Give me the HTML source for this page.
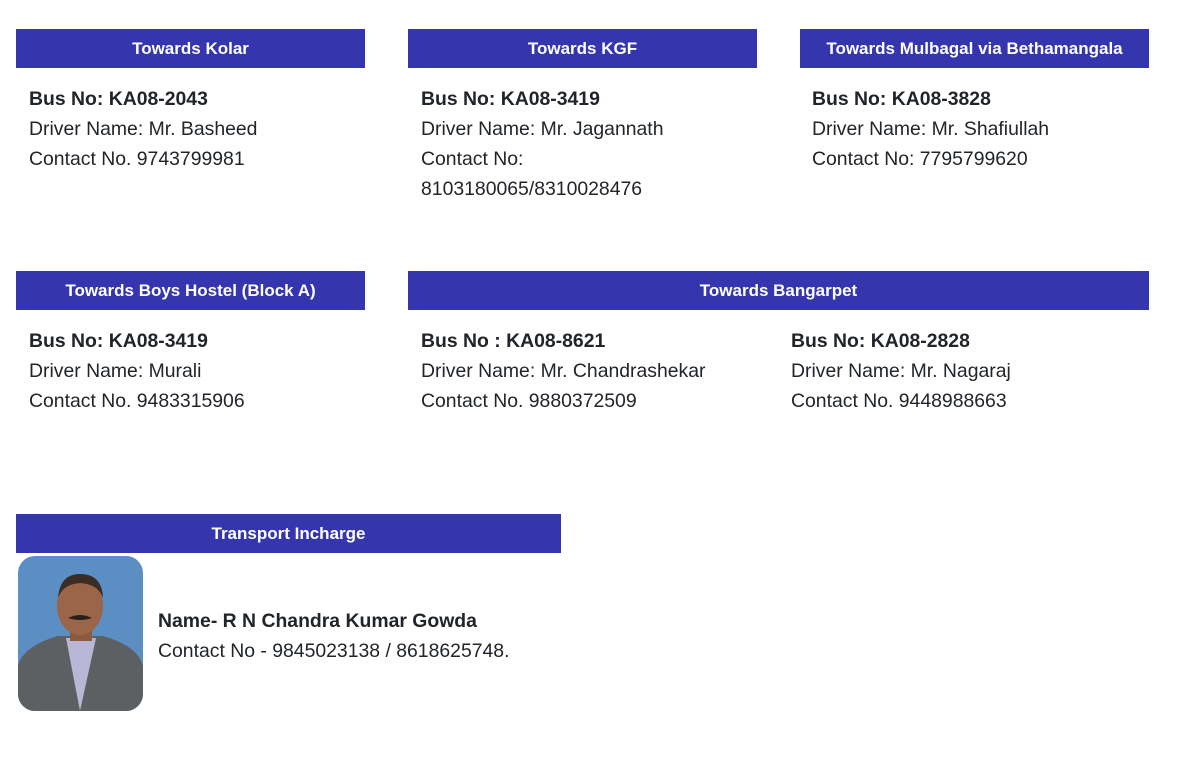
<!DOCTYPE html>
<html><head><style>
body{margin:0;background:#fff;font-family:"Liberation Sans",sans-serif;color:#212529;width:1196px;height:771px;overflow:hidden;position:relative}
.h{position:absolute;height:39px;background:#3535ae;color:#fff;font-weight:bold;font-size:17px;line-height:40px;text-align:center}
.t{position:absolute;font-size:19.4px;line-height:30px}
.t b{font-weight:bold}
</style></head><body>
<div class="h" style="left:16px;top:29px;width:349px">Towards Kolar</div>
<div class="h" style="left:408px;top:29px;width:349px">Towards KGF</div>
<div class="h" style="left:800px;top:29px;width:349px">Towards Mulbagal via Bethamangala</div>
<div class="t" style="left:29px;top:84px"><b>Bus No: KA08-2043</b><br>Driver Name: Mr. Basheed<br>Contact No. 9743799981</div>
<div class="t" style="left:421px;top:84px"><b>Bus No: KA08-3419</b><br>Driver Name: Mr. Jagannath<br>Contact No:<br>8103180065/8310028476</div>
<div class="t" style="left:812px;top:84px"><b>Bus No: KA08-3828</b><br>Driver Name: Mr. Shafiullah<br>Contact No: 7795799620</div>

<div class="h" style="left:16px;top:271px;width:349px">Towards Boys Hostel (Block A)</div>
<div class="h" style="left:408px;top:271px;width:741px">Towards Bangarpet</div>
<div class="t" style="left:29px;top:326px"><b>Bus No: KA08-3419</b><br>Driver Name: Murali<br>Contact No. 9483315906</div>
<div class="t" style="left:421px;top:326px"><b>Bus No : KA08-8621</b><br>Driver Name: Mr. Chandrashekar<br>Contact No. 9880372509</div>
<div class="t" style="left:791px;top:326px"><b>Bus No: KA08-2828</b><br>Driver Name: Mr. Nagaraj<br>Contact No. 9448988663</div>

<div class="h" style="left:16px;top:514px;width:545px">Transport Incharge</div>
<svg style="position:absolute;left:18px;top:556px" width="125" height="155" viewBox="0 0 125 155">
<defs><clipPath id="c"><rect width="125" height="155" rx="17"/></clipPath></defs>
<g clip-path="url(#c)">
<rect width="125" height="155" fill="#5b8ec2"/>
<path d="M0 155 L0 110 Q5 90 40 80 L85 80 Q120 90 125 110 L125 155Z" fill="#5d6063"/>
<path d="M48 82 L62 155 L78 82Z" fill="#b9b6d8"/>
<rect x="52" y="65" width="22" height="20" fill="#8a5a3e"/>
<ellipse cx="62" cy="50" rx="23" ry="29" fill="#9a6548"/>
<path d="M40 42 Q42 18 62 18 Q84 18 85 42 Q80 28 62 27 Q45 28 40 42Z" fill="#3b2c25"/>
<path d="M50 62 Q62 56 74 62 Q62 66 50 62Z" fill="#2a1e1a"/>
</g></svg>
<div class="t" style="left:158px;top:606px"><b>Name- R N Chandra Kumar Gowda</b><br>Contact No - 9845023138 / 8618625748.</div>
</body></html>
